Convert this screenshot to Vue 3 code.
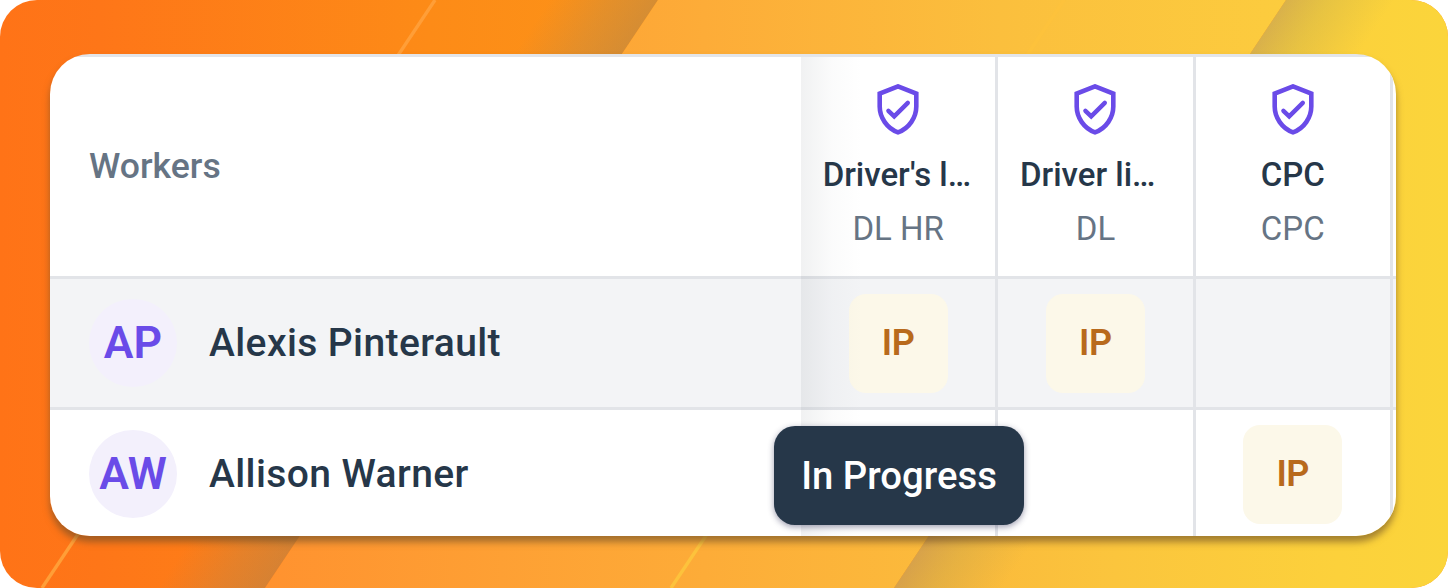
<template>
  <div class="banner">
    <svg class="backdrop" width="1448" height="588" viewBox="0 0 1448 588" aria-hidden="true">
      <defs>
        <linearGradient id="warm" gradientUnits="userSpaceOnUse" x1="0" y1="0" x2="660" y2="0">
          <stop offset="0" stop-color="#ff7317" />
          <stop offset="0.15" stop-color="#fe7618" />
          <stop offset="0.65" stop-color="#fd8b17" />
          <stop offset="1" stop-color="#fc9418" />
        </linearGradient>
        <linearGradient id="middle" gradientUnits="userSpaceOnUse" x1="265" y1="0" x2="1286" y2="0">
          <stop offset="0" stop-color="#ff922f" />
          <stop offset="0.43" stop-color="#fdac38" />
          <stop offset="0.72" stop-color="#fbbf3d" />
          <stop offset="1" stop-color="#fccc3e" />
        </linearGradient>
        <linearGradient id="sunny" gradientUnits="userSpaceOnUse" x1="894" y1="0" x2="1448" y2="0">
          <stop offset="0" stop-color="#fab43a" />
          <stop offset="0.4" stop-color="#fbc53d" />
          <stop offset="0.8" stop-color="#fcd13b" />
          <stop offset="1" stop-color="#fbd53b" />
        </linearGradient>
        <linearGradient id="fold-left" gradientUnits="userSpaceOnUse" x1="658" y1="0" x2="583" y2="-50">
          <stop offset="0" stop-color="#96825f" stop-opacity="0.38" />
          <stop offset="0.45" stop-color="#968764" stop-opacity="0.23" />
          <stop offset="1" stop-color="#968764" stop-opacity="0" />
        </linearGradient>
        <linearGradient id="fold-right" gradientUnits="userSpaceOnUse" x1="1286" y1="0" x2="1361" y2="50">
          <stop offset="0" stop-color="#a08264" stop-opacity="0.38" />
          <stop offset="0.4" stop-color="#a0965a" stop-opacity="0.22" />
          <stop offset="1" stop-color="#a0965a" stop-opacity="0" />
        </linearGradient>
      </defs>
      <rect width="1448" height="588" fill="url(#warm)" />
      <path d="M0 0H658L265 588H0Z" fill="url(#fold-left)" />
      <path d="M658 0H1286L894 588H265Z" fill="url(#middle)" />
      <path d="M1286 0H1448V588H894Z" fill="url(#sunny)" />
      <path d="M1286 0H1448V588H894Z" fill="url(#fold-right)" />
      <path d="M435 0L42 588" stroke="#ff9e37" stroke-width="3.4" />
      <path d="M1064 0L671 588" stroke="#fdc23c" stroke-width="3.4" />
    </svg>

    <div class="card-shadow">
      <div class="card">
        <div class="row head">
          <div class="cell worker">Workers</div>
          <div v-for="col in columns" :key="col.title" class="cell column">
            <svg class="shield" width="42" height="51" viewBox="0 0 42 51" fill="none">
              <path d="M21 2.4L39.3 9.6V22.5C39.3 33.5 32 44.5 21 48.3C10 44.5 2.7 33.5 2.7 22.5V9.6Z" />
              <path d="M11.4 26.8L17.2 32.4L30.8 18.9" />
            </svg>
            <div class="title" :class="{ truncated: col.title.endsWith('…') }">{{ col.title }}</div>
            <div class="code">{{ col.code }}</div>
          </div>
          <div class="cell"></div>
        </div>

        <div v-for="(worker, index) in workers" :key="worker.name" class="row" :class="{ hovered: index === 0 }">
          <div class="cell worker">
            <span class="avatar">{{ worker.initials }}</span>
            <span class="name">{{ worker.name }}</span>
          </div>
          <div v-for="(status, i) in worker.statuses" :key="i" class="cell status">
            <span v-if="status" class="badge">{{ status }}</span>
          </div>
          <div class="cell"></div>
        </div>

        <div class="edge-shadow"></div>
        <div class="tooltip">In Progress</div>
      </div>
    </div>
  </div>
</template>

<script setup>
const columns = [
  { title: "Driver's l…", code: 'DL HR' },
  { title: 'Driver li…', code: 'DL' },
  { title: 'CPC', code: 'CPC' }
]

const workers = [
  { initials: 'AP', name: 'Alexis Pinterault', statuses: ['IP', 'IP', ''] },
  { initials: 'AW', name: 'Allison Warner', statuses: ['', '', 'IP'] }
]
</script>

<style>
body {
  margin: 0;
  background: #ffffff;
}
</style>

<style scoped>
.banner {
  position: relative;
  isolation: isolate;
  box-sizing: border-box;
  width: 1448px;
  height: 588px;
  padding: 54px 52px 52px 50px;
  border-radius: 37px;
  overflow: hidden;
  font-family: Roboto, 'Liberation Sans', sans-serif;
  color: #263749;
}

.backdrop {
  position: absolute;
  inset: 0;
  z-index: -1;
}

.card-shadow {
  border-radius: 40px;
  box-shadow: 0 6px 7px rgba(105, 75, 38, 0.6);
}

.card {
  position: relative;
  box-sizing: border-box;
  width: 1346px;
  height: 482px;
  padding-top: 3px;
  border-radius: 40px;
  overflow: hidden;
  background: linear-gradient(#e3e5e9 3px, #ffffff 3px);
}

.row {
  display: grid;
  grid-template-columns: 751px 197.3px 197.3px 197.3px 3.1px;
  height: 131px;
}

.row.head {
  height: 222px;
}

.cell {
  box-sizing: border-box;
  border-bottom: 3px solid #e2e4e8;
}

.column,
.status {
  border-right: 3px solid #e2e4e8;
}

.hovered {
  background: #f3f4f6;
}

.worker {
  display: flex;
  align-items: center;
  padding-left: 39px;
}

.head .worker {
  padding-bottom: 1px;
  font-size: 35.6px;
  font-weight: 500;
  color: #667484;
}

.column {
  display: flex;
  flex-direction: column;
  align-items: center;
  padding-top: 27px;
}

.shield {
  stroke: #6a4be8;
  stroke-width: 4.6;
}

.shield path:last-child {
  stroke-width: 4.4;
  stroke-linecap: round;
}

.title {
  margin-top: 20px;
  width: 151px;
  font-size: 33px;
  font-weight: 500;
  line-height: 40px;
  text-align: center;
  white-space: nowrap;
}

.title.truncated {
  text-align: left;
}

.code {
  margin-top: 14px;
  font-size: 33px;
  line-height: 40px;
  color: #667484;
}

.avatar {
  display: flex;
  align-items: center;
  justify-content: center;
  width: 88px;
  height: 88px;
  border-radius: 50%;
  background: #f3f0fc;
  color: #6a4be8;
  font-size: 44.5px;
  font-weight: 600;
}

.name {
  margin-left: 32px;
  font-size: 39px;
  font-weight: 500;
  letter-spacing: 0.4px;
}

.status {
  display: flex;
  align-items: center;
  justify-content: center;
}

.badge {
  display: flex;
  align-items: center;
  justify-content: center;
  width: 99px;
  height: 99px;
  border-radius: 17px;
  background: #fcf8e9;
  color: #b86a1c;
  font-size: 36px;
  font-weight: 600;
  letter-spacing: -0.4px;
}

.edge-shadow {
  position: absolute;
  left: 751px;
  top: 3px;
  bottom: 0;
  width: 62px;
  background: linear-gradient(to right, rgba(50, 60, 70, 0.07), rgba(50, 60, 70, 0.02) 50%, rgba(50, 60, 70, 0));
}

.tooltip {
  position: absolute;
  left: 724px;
  top: 372px;
  width: 250px;
  height: 99px;
  border-radius: 21px;
  background: #263749;
  color: #ffffff;
  font-size: 38.3px;
  font-weight: 500;
  line-height: 99px;
  text-align: center;
  box-shadow: 0 2px 6px rgba(40, 40, 80, 0.45);
}
</style>
